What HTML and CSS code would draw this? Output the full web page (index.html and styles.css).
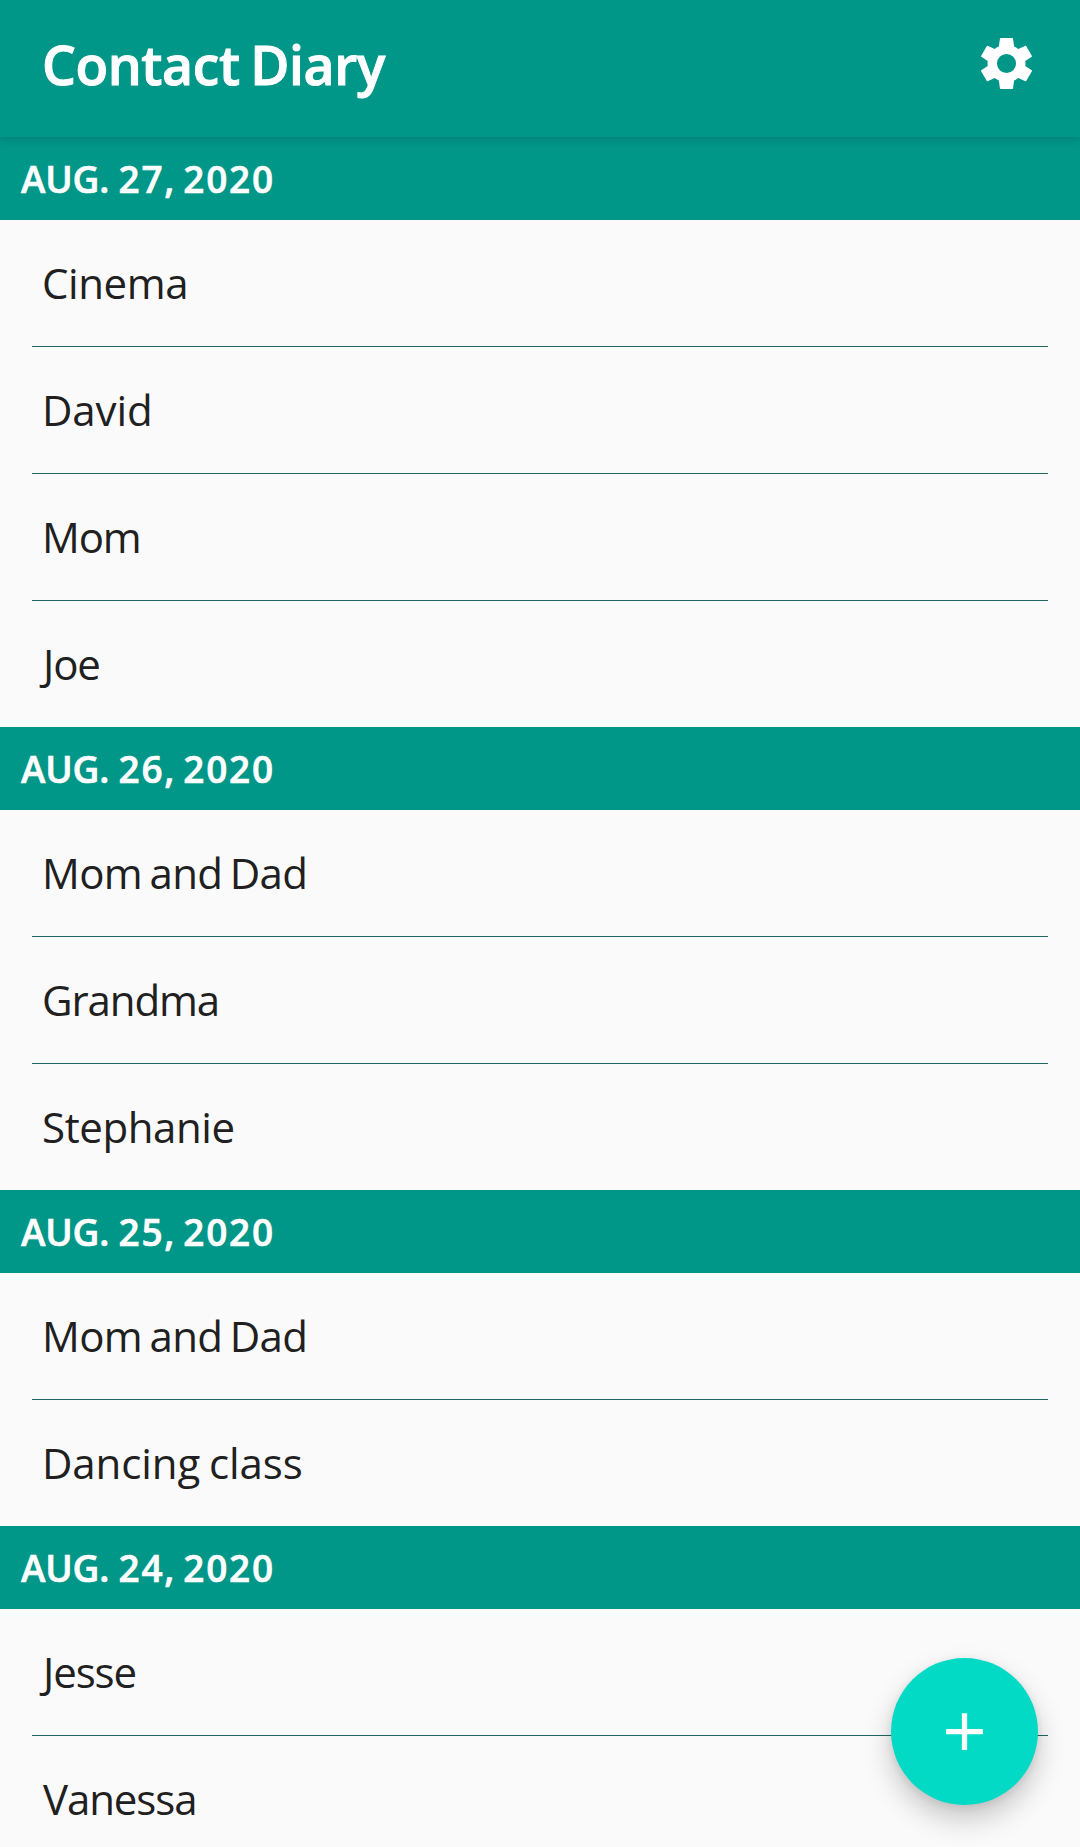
FILE: index.html
```html
<!DOCTYPE html>
<html lang="en">
<head>
<meta charset="utf-8">
<title>Contact Diary</title>
<link rel="stylesheet" href="styles.css">
</head>
<body>
<header class="app-bar">
  <h1 class="app-title">Contact Diary</h1>
  <button class="settings" aria-label="Settings">
    <svg viewBox="0 0 24 24"><path fill-rule="evenodd" d="M9.7 2h4.6q.25 0 .28.25l.42 3.1q.9.35 1.65.9l2.75-1.2q.25-.1.4.12l2.2 3.83q.12.22-.08.38L19.4 11q.12 1 0 2l2.52 1.62q.2.16.08.38l-2.2 3.83q-.15.22-.4.12l-2.75-1.2q-.75.55-1.65.9l-.42 3.1q-.03.25-.28.25H9.7q-.25 0-.28-.25L9 18.65q-.9-.35-1.65-.9l-2.75 1.2q-.25.1-.4-.12L2 15q-.12-.22.08-.38L4.6 13q-.12-1 0-2L2.08 9.38Q1.88 9.22 2 9l2.2-3.83q.15-.22.4-.12l2.75 1.2Q8.1 5.7 9 5.35l.42-3.1Q9.45 2 9.7 2zM12 8.25a3.75 3.75 0 1 0 0 7.5 3.75 3.75 0 0 0 0-7.5z"/></svg>
  </button>
</header>
<main class="diary">
  <section>
    <h2 class="date"><span class="month">AUG. </span>27, 2020</h2>
    <ul class="entries">
      <li class="entry snug">Cinema</li>
      <li class="entry">David</li>
      <li class="entry tight">Mom</li>
      <li class="entry close hook">Joe</li>
    </ul>
  </section>
  <section>
    <h2 class="date"><span class="month">AUG. </span>26, 2020</h2>
    <ul class="entries">
      <li class="entry close">Mom and Dad</li>
      <li class="entry tight">Grandma</li>
      <li class="entry snug">Stephanie</li>
    </ul>
  </section>
  <section>
    <h2 class="date"><span class="month">AUG. </span>25, 2020</h2>
    <ul class="entries">
      <li class="entry close">Mom and Dad</li>
      <li class="entry">Dancing class</li>
    </ul>
  </section>
  <section>
    <h2 class="date"><span class="month">AUG. </span>24, 2020</h2>
    <ul class="entries">
      <li class="entry hook">Jesse</li>
      <li class="entry hook">Vanessa</li>
    </ul>
  </section>
</main>
<button class="fab" aria-label="Add contact">
  <svg viewBox="0 0 24 24"><path d="M19 13h-6v6h-2v-6H5v-2h6V5h2v6h6v2z"/></svg>
</button>
</body>
</html>
```
FILE: styles.css
```css
* { box-sizing: border-box; margin: 0; padding: 0; }
body {
  height: 1847px;
  overflow: hidden;
  background: #fafafa;
  color: #202020;
  font-family: "Open Sans", "Noto Sans", sans-serif;
}
button { border: 0; background: none; display: flex; align-items: center; justify-content: center; }
svg { display: block; fill: #fff; }

.app-bar {
  position: relative;
  z-index: 1;
  display: flex;
  align-items: center;
  justify-content: space-between;
  height: 137px;
  padding: 0 43px 10px 42px;
  background: #009688;
  box-shadow: 0 1px 8px rgba(0, 0, 0, .18);
}
.app-title {
  padding-top: 3px;
  color: #fff;
  font-size: 53.5px;
  font-weight: 600;
  line-height: 124px;
  letter-spacing: -.4px;
  word-spacing: -3px;
  -webkit-text-stroke: 1px #fff;
}
.settings svg { width: 61px; height: 61px; }

.date {
  height: 83px;
  padding-left: 21px;
  background: #009688;
  color: #fff;
  font-size: 37px;
  font-weight: 600;
  line-height: 84px;
  letter-spacing: 1.75px;
  word-spacing: -4.3px;
  -webkit-text-stroke: .6px #fff;
}
.month { letter-spacing: -.2px; word-spacing: 0; }
.entries { list-style: none; padding: 0 32px; }
.entry {
  height: 127px;
  padding-left: 10px;
  border-bottom: 1px solid #1f6662;
  font-size: 42px;
  line-height: 126px;
  letter-spacing: -.1px;
  word-spacing: -2px;
}
.entry:last-child { height: 126px; border-bottom: 0; }
.snug { letter-spacing: -.4px; }
.close { letter-spacing: -.6px; word-spacing: -3px; }
.tight { letter-spacing: -1.1px; }
.hook { padding-left: 11px; letter-spacing: -1.1px; }

.fab {
  position: fixed;
  right: 42px;
  bottom: 42px;
  width: 147px;
  height: 147px;
  border-radius: 50%;
  background: #03dac6;
  box-shadow: 0 14px 28px rgba(0, 0, 0, .21), 0 2px 10px rgba(0, 0, 0, .09);
}
.fab svg { width: 63px; height: 63px; }
```
